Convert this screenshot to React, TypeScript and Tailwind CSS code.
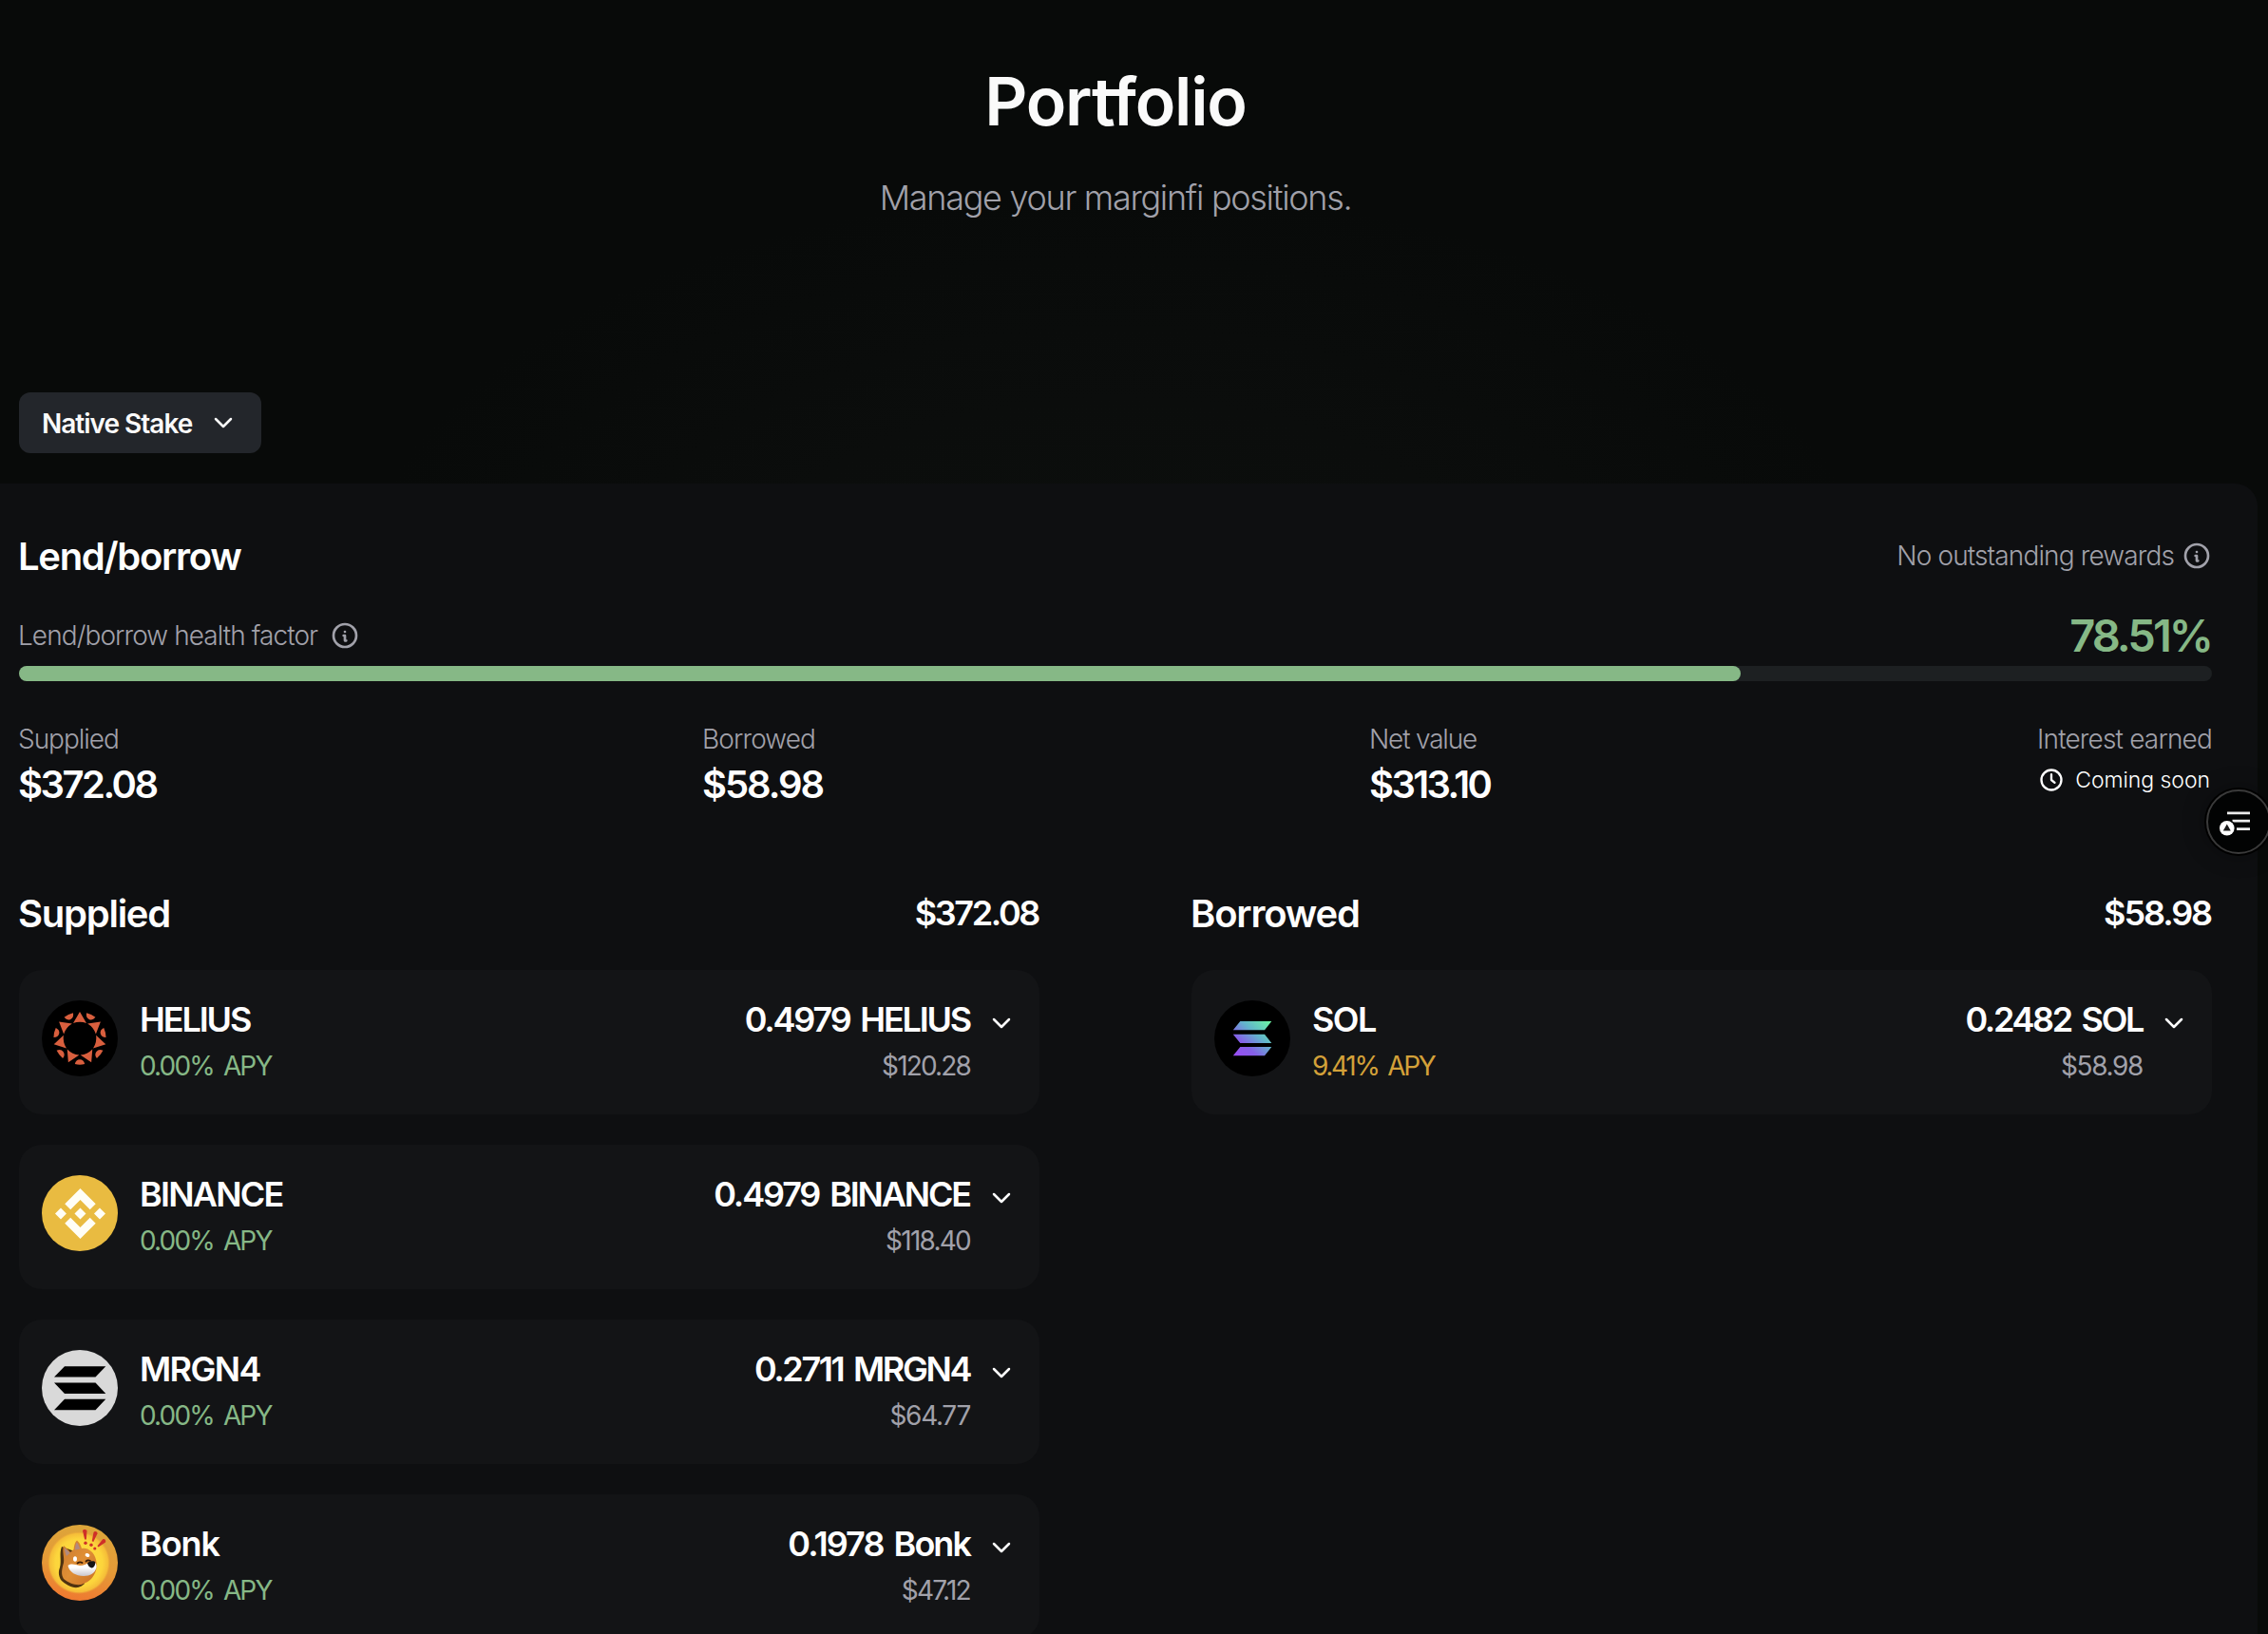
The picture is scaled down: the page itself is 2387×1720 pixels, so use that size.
import React from "react";
import { SiBinance } from "react-icons/si";

function ChevronDown() {
  return (
    <svg className="size-8 shrink-0" viewBox="0 0 24 24" fill="none" stroke="currentColor" strokeWidth="1.9" strokeLinecap="round" strokeLinejoin="round">
      <path d="M6 9l6 6l6 -6" />
    </svg>
  );
}

function InfoCircle() {
  return (
    <svg className="size-8 shrink-0" viewBox="0 0 24 24" fill="none" stroke="currentColor" strokeWidth="2" strokeLinecap="round" strokeLinejoin="round">
      <path d="M3 12a9 9 0 1 0 18 0a9 9 0 0 0 -18 0" />
      <path d="M12 9h.01" />
      <path d="M11 12h1v4h1" />
    </svg>
  );
}

function ClockIcon() {
  return (
    <svg className="size-7 shrink-0" viewBox="0 0 24 24" fill="none" stroke="currentColor" strokeWidth="2" strokeLinecap="round" strokeLinejoin="round">
      <path d="M3 12a9 9 0 1 0 18 0a9 9 0 0 0 -18 0" />
      <path d="M12 7v5l3 2.4" />
    </svg>
  );
}

const SEVENTHS = [0, 1, 2, 3, 4, 5, 6];

function HeliusLogo() {
  return (
    <svg className="size-20 shrink-0" viewBox="0 0 80 80">
      <circle cx="40" cy="40" r="40" fill="#000" />
      <g fill="#d95f3e">
        {SEVENTHS.map((i) => (
          <g key={i} transform={`rotate(${(i * 360) / 7} 40 40)`}>
            <path d="M40 12L47 24Q40 21.400 33 24Z" />
            <path transform={`rotate(${180 / 7} 40 40)`} d="M34.8 12.9Q40 11.8 45.2 12.9Q44.2 17.6 40 17.7Q35.8 17.6 34.8 12.9Z" />
          </g>
        ))}
      </g>
    </svg>
  );
}

function BinanceLogo() {
  return (
    <div className="flex size-20 shrink-0 items-center justify-center rounded-full bg-[#e9bb41] text-[#fffef6]">
      <SiBinance size={53} />
    </div>
  );
}

function MrgnLogo() {
  return (
    <svg className="size-20 shrink-0" viewBox="0 0 80 80">
      <circle cx="40" cy="40" r="40" fill="#d9d9d9" />
      <path d="M13 28.4L24 17.2H67.3L56.5 28.4ZM13 34.5H56.5L67.3 46H24ZM13 63.2L24 51.7H67.3L56.5 63.2Z" fill="#000" />
    </svg>
  );
}

function SolLogo() {
  return (
    <svg className="size-20 shrink-0" viewBox="0 0 80 80">
      <defs>
        <linearGradient id="sol" gradientUnits="userSpaceOnUse" x1="24" y1="60" x2="58" y2="22">
          <stop offset="0" stopColor="#9a4df5" />
          <stop offset="0.3" stopColor="#8560e8" />
          <stop offset="0.62" stopColor="#62b4cc" />
          <stop offset="1" stopColor="#6cf3a4" />
        </linearGradient>
      </defs>
      <circle cx="40" cy="40" r="40" fill="#000" />
      <path d="M19.8 31.3L27.3 22H60.3L53 31.3ZM19.8 35.7H53L60.3 45H27.3ZM19.8 58.3L27.3 49H60.3L53 58.3Z" fill="url(#sol)" />
    </svg>
  );
}

function BonkLogo() {
  return (
    <svg className="size-20 shrink-0" viewBox="0 0 80 80">
      <defs>
        <linearGradient id="bonk-rim" x1="0.6" y1="0" x2="0.4" y2="1">
          <stop offset="0" stopColor="#dca63a" />
          <stop offset="0.55" stopColor="#e59a37" />
          <stop offset="1" stopColor="#ef7830" />
        </linearGradient>
        <radialGradient id="bonk-glow">
          <stop offset="0" stopColor="#ffe23e" />
          <stop offset="0.75" stopColor="#fcd53c" />
          <stop offset="0.93" stopColor="#f5bd38" />
          <stop offset="1" stopColor="#eca436" stopOpacity="0" />
        </radialGradient>
        <linearGradient id="bonk-fur" x1="0" y1="0" x2="1" y2="1">
          <stop offset="0" stopColor="#c8782f" />
          <stop offset="0.5" stopColor="#e08f35" />
          <stop offset="1" stopColor="#c96f25" />
        </linearGradient>
        <linearGradient id="bonk-muzzle" x1="0" y1="0" x2="0" y2="1">
          <stop offset="0.4" stopColor="#ffffff" />
          <stop offset="1" stopColor="#c9c6cc" />
        </linearGradient>
      </defs>
      <circle cx="40" cy="40" r="40" fill="url(#bonk-rim)" />
      <circle cx="39" cy="40" r="33" fill="url(#bonk-glow)" />
      <path d="M21 23C18 30 21 38 19 45C17 50 18 54 20 58C25 63 32 67 38 66C41 65 43 64 45 62L40 30Z" fill="#4f3210" />
      <path d="M23 22C21 28 24 34 23 40C21 47 20 52 23 57C29 62 38 65 44 62C50 60 55 55 57 48C59 42 57 32 52 28C49 25 45 24 42 25C41 21 39 18 37 16.500C35 18 34 22 33.500 26L30 29C28 26 25 24 23 22Z" fill="url(#bonk-fur)" />
      <path d="M24 24.500C24 28 25 31 26 33L29.500 30C28 27.500 26 26 24 24.500ZM36.800 18.500C35.500 21 35 23 35 26.500L40 25.500C39.500 22.500 38.500 20.500 36.800 18.500Z" fill="#b08a80" />
      <path d="M27.500 43C31 40 35 42 40 43C44 43 48 41 51 39C55 38 58 40 57.500 45C56 51 51 54 44 54C36 54 29 50 27.500 43Z" fill="url(#bonk-muzzle)" />
      <path d="M48 40C51 38 55 37.500 56 39C57 41 55 45.500 52.500 45.500C50 45 48 42.500 48 40Z" fill="#151313" />
      <ellipse cx="35" cy="36" rx="2" ry="2.800" fill="#fff" />
      <ellipse cx="48" cy="32" rx="2.500" ry="1.800" fill="#fff" transform="rotate(25 48 32)" />
      <path d="M37.500 40.500Q40 38.500 42.500 40M46.500 38.500Q48.500 36.500 51 38" fill="none" stroke="#3a1d08" strokeWidth="1.800" strokeLinecap="round" />
      <g fill="#cf2f28">
        <path d="M43 6.500C43 4.500 47 4.500 47.500 6.500L46.800 15.500H45.200Z" />
        <circle cx="46" cy="19.300" r="1.700" />
        <path d="M54.500 8C55.500 6 59 7 58.500 9.300L54.300 18L52.800 17.300Z" />
        <circle cx="52" cy="21.300" r="1.700" />
        <path d="M64 15.500C66 14 68 16.500 67 18.500L59.500 23.500L58.500 22.300Z" />
        <circle cx="55.800" cy="25" r="1.600" />
      </g>
    </svg>
  );
}

type Position = {
  logo: React.ReactNode;
  name: string;
  nameClass: string;
  apy: string;
  apyClass: string;
  amount: string;
  amountClass: string;
  usd: string;
  usdClass: string;
};

const supplied: Position[] = [
  { logo: <HeliusLogo />, name: "HELIUS", nameClass: "tracking-[-2.1px]", apy: "0.00% APY", apyClass: "tracking-[-1.85px] text-[#86b886]", amount: "0.4979 HELIUS", amountClass: "tracking-[-2.2px]", usd: "$120.28", usdClass: "tracking-[-1.84px]" },
  { logo: <BinanceLogo />, name: "BINANCE", nameClass: "tracking-[-1.75px]", apy: "0.00% APY", apyClass: "tracking-[-1.85px] text-[#86b886]", amount: "0.4979 BINANCE", amountClass: "tracking-[-2.15px]", usd: "$118.40", usdClass: "tracking-[-1.76px]" },
  { logo: <MrgnLogo />, name: "MRGN4", nameClass: "tracking-[-1.6px]", apy: "0.00% APY", apyClass: "tracking-[-1.85px] text-[#86b886]", amount: "0.2711 MRGN4", amountClass: "tracking-[-2.4px]", usd: "$64.77", usdClass: "tracking-[-1.31px]" },
  { logo: <BonkLogo />, name: "Bonk", nameClass: "tracking-[-1.1px]", apy: "0.00% APY", apyClass: "tracking-[-1.85px] text-[#86b886]", amount: "0.1978 Bonk", amountClass: "tracking-[-1.95px]", usd: "$47.12", usdClass: "tracking-[-1.69px]" },
];

const borrowed: Position[] = [
  { logo: <SolLogo />, name: "SOL", nameClass: "tracking-[-1.6px]", apy: "9.41% APY", apyClass: "tracking-[-2.3px] text-[#d3a139]", amount: "0.2482 SOL", amountClass: "tracking-[-2.35px]", usd: "$58.98", usdClass: "tracking-[-1.38px]" },
];

function PositionCard({ p }: { p: Position }) {
  return (
    <div className="flex h-[152px] shrink-0 items-start rounded-3xl bg-[#131416] px-6 pt-7">
      <div className="mt-1">{p.logo}</div>
      <div className="ml-[23px] flex flex-col gap-[5px]">
        <div className={`text-[36px] leading-[48px] font-semibold text-white ${p.nameClass}`}>{p.name}</div>
        <div className={`text-[28px] leading-[40px] [word-spacing:4px] ${p.apyClass}`}>{p.apy}</div>
      </div>
      <div className="mr-px ml-auto flex flex-col items-end gap-[5px]">
        <div className={`text-[36px] leading-[48px] font-semibold text-white [word-spacing:4px] ${p.amountClass}`}>{p.amount}</div>
        <div className={`text-[28px] leading-[40px] text-[#a1a1aa] ${p.usdClass}`}>{p.usd}</div>
      </div>
      <div className="mt-3 ml-4 text-white">
        <ChevronDown />
      </div>
    </div>
  );
}

function PositionList({ title, titleClass, total, totalClass, items }: { title: string; titleClass: string; total: string; totalClass: string; items: Position[] }) {
  return (
    <section className="w-[1074px]">
      <div className="flex h-14 items-center justify-between font-semibold text-white">
        <h2 className={`-ml-px text-[40px] leading-[56px] ${titleClass}`}>{title}</h2>
        <span className={`mr-px -mt-0.5 text-[36px] leading-[54px] ${totalClass}`}>{total}</span>
      </div>
      <div className="mt-[31px] flex flex-col gap-8">
        {items.map((p) => (
          <PositionCard key={p.name} p={p} />
        ))}
      </div>
    </section>
  );
}

function Stat({ label, labelClass, value, valueClass }: { label: string; labelClass: string; value: string; valueClass: string }) {
  return (
    <div className="-ml-px pt-px">
      <div className={`text-[28px] leading-[40px] font-light text-[#a1a1aa] ${labelClass}`}>{label}</div>
      <div className={`text-[40px] leading-[56px] font-semibold text-white ${valueClass}`}>{value}</div>
    </div>
  );
}

export default function App() {
  return (
    <div className="relative h-[1720px] w-[2387px] overflow-hidden bg-[#080a09] bg-[radial-gradient(ellipse_800px_440px_at_1174px_640px,#0c0f0d_0%,#0b0d0c_50%,#080a09_100%)] font-['Inter',sans-serif]">
      <header className="flex w-[2348px] flex-col items-center pt-[67px]">
        <h1 className="text-[70px] leading-[80px] font-semibold tracking-[-1.2px] text-[#fafafa] [font-variant-ligatures:none]">Portfolio</h1>
        <p className="mt-[34px] text-[36px] leading-[54px] font-light tracking-[-1.3px] text-[#a1a1aa]">Manage your marginfi positions.</p>
      </header>

      <button className="mt-[178px] ml-5 flex h-16 w-[255px] items-center justify-between rounded-xl bg-[#23262b] pr-6 pl-6 text-[28px] font-semibold tracking-[-1px] text-[#fafafa]">
        <span className="pt-px">Native Stake</span>
        <ChevronDown />
      </button>

      <main className="mt-8 h-[1211px] w-[2376px] overflow-hidden rounded-tr-3xl bg-[#0e0f11] pt-[52px] pr-12 pl-5">
        <div className="flex h-12 items-center justify-between">
          <h2 className="-ml-px pt-0.5 text-[40px] leading-[48px] font-semibold tracking-[-1.3px] text-white">Lend/borrow</h2>
          <div className="flex items-center gap-2 text-[28px] font-light tracking-[-0.87px] text-[#a1a1aa]">
            No outstanding rewards
            <InfoCircle />
          </div>
        </div>

        <div className="mt-8 flex h-14 items-center justify-between">
          <div className="-ml-px flex items-center gap-[13px] text-[28px] font-light tracking-[-0.93px] text-[#a1a1aa]">
            Lend/borrow health factor
            <InfoCircle />
          </div>
          <span className="mr-px text-[47px] leading-[56px] font-semibold tracking-[-3px] text-[#86b886]">78.51%</span>
        </div>
        <div className="mt-1 h-4 rounded-full bg-[#1d2022]">
          <div className="h-4 w-[78.51%] rounded-full bg-[#86b886]" />
        </div>

        <div className="mt-10 grid h-[97px] grid-cols-[720px_702px_1fr_auto]">
          <Stat label="Supplied" labelClass="tracking-[-1.03px]" value="$372.08" valueClass="tracking-[-2.5px]" />
          <Stat label="Borrowed" labelClass="tracking-[-0.9px]" value="$58.98" valueClass="tracking-[-2.05px]" />
          <Stat label="Net value" labelClass="tracking-[-1.18px]" value="$313.10" valueClass="tracking-[-2.6px]" />
          <div className="flex flex-col items-end pt-px">
            <div className="text-[28px] leading-[40px] font-light tracking-[-0.83px] text-[#a1a1aa]">Interest earned</div>
            <div className="mr-0.5 -mt-px flex h-12 items-center gap-[11px] text-[23px] font-[350] tracking-[-0.05px] text-white">
              <ClockIcon />
              Coming soon
            </div>
          </div>
        </div>

        <div className="mt-20 flex justify-between">
          <PositionList title="Supplied" titleClass="tracking-[-1.25px]" total="$372.08" totalClass="tracking-[-2.35px]" items={supplied} />
          <PositionList title="Borrowed" titleClass="tracking-[-1.2px]" total="$58.98" totalClass="tracking-[-2.1px]" items={borrowed} />
        </div>
      </main>

      <button className="absolute top-[831px] left-[2322px] flex size-[68px] items-center justify-center rounded-full border-2 border-[#3a3a3a] bg-[#020303] shadow-[0_0_0_2px_#000,0_0_24px_rgba(0,0,0,0.35)]">
        <svg className="size-16 shrink-0" viewBox="0 0 64 64">
          <path d="M20 21.500H44V24.300H20ZM25.500 29.700H44V32.400H25.500ZM30 38.200H44V41H30Z" fill="#ececec" />
          <circle cx="19.800" cy="38.800" r="9.300" fill="#020303" />
          <circle cx="19.800" cy="38.800" r="7.800" fill="#fff" />
          <path d="M19.800 34.500L23.800 41.500H15.800Z" fill="#1a1a1a" />
        </svg>
      </button>
    </div>
  );
}
